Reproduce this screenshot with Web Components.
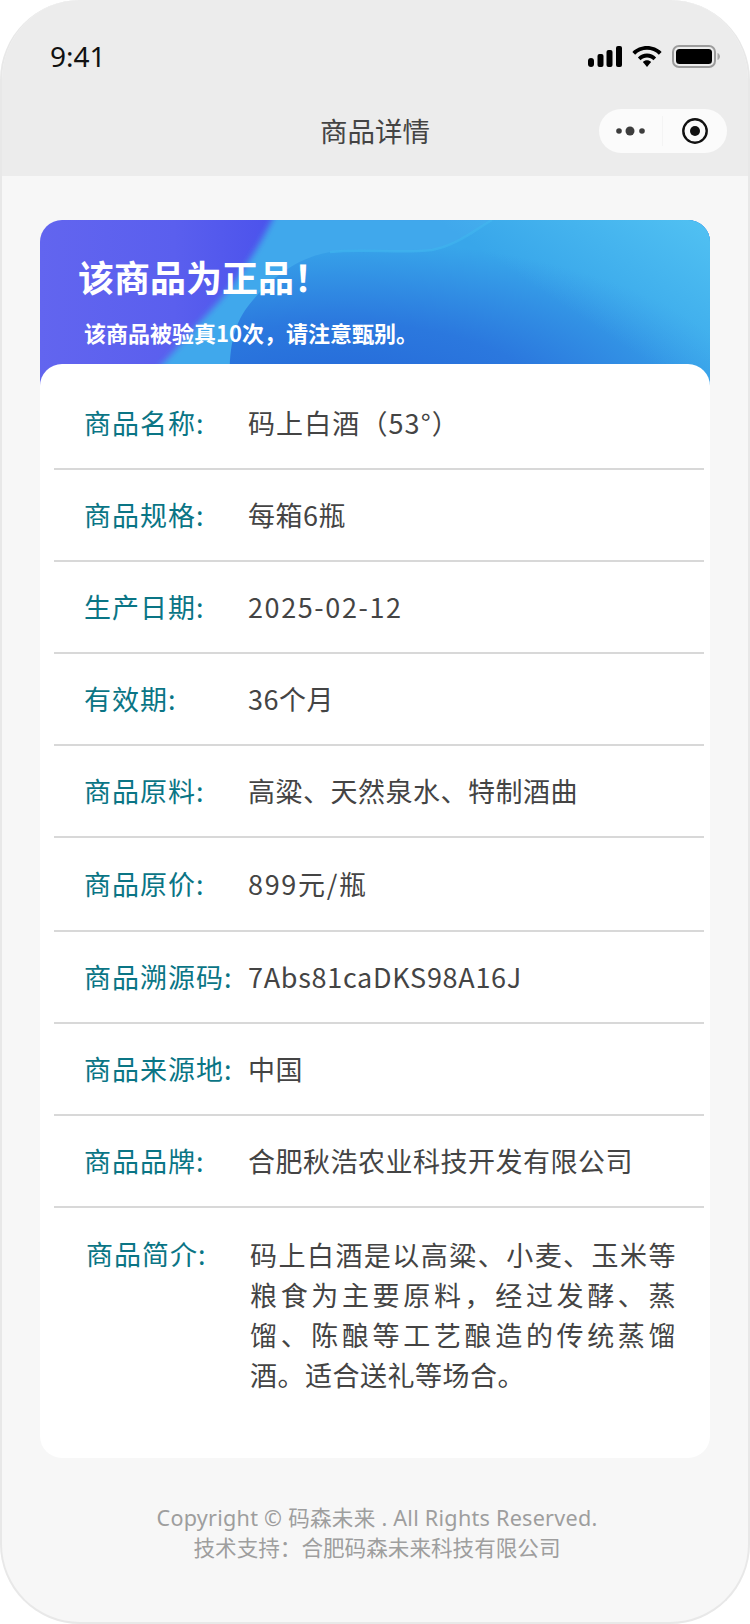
<!DOCTYPE html>
<html lang="zh">
<head>
<meta charset="utf-8">
<title>商品详情</title>
<style>
  html, body { margin: 0; padding: 0; background: #fff; }
  body { font-family: "Noto Sans", "Noto Sans CJK SC", sans-serif; }
</style>
</head>
<body>
<phone-frame>
  <status-bar slot="top"></status-bar>
  <nav-bar slot="top">商品详情</nav-bar>
  <product-card>
    <span slot="title">该商品为正品！</span>
    <span slot="sub">该商品被验真10次，请注意甄别。</span>
    <info-row label="商品名称:" style="--value-spacing:1.100px">码上白酒（53°）</info-row>
    <info-row label="商品规格:">每箱6瓶</info-row>
    <info-row label="生产日期:" style="--value-spacing:1.600px">2025-02-12</info-row>
    <info-row label="有效期:">36个月</info-row>
    <info-row label="商品原料:">高粱、天然泉水、特制酒曲</info-row>
    <info-row label="商品原价:" style="--value-spacing:1.700px;min-height:94px">899元/瓶</info-row>
    <info-row label="商品溯源码:" style="--value-spacing:.7px">7Abs81caDKS98A16J</info-row>
    <info-row label="商品来源地:">中国</info-row>
    <info-row label="商品品牌:">合肥秋浩农业科技开发有限公司</info-row>
    <info-row label="商品简介:" long>码上白酒是以高粱、小麦、玉米等粮食为主要原料，经过发酵、蒸馏、陈酿等工艺酿造的传统蒸馏酒。适合送礼等场合。</info-row>
  </product-card>
  <page-footer>
    <div style="letter-spacing:.25px">Copyright © 码森未来 . All Rights Reserved.</div>
    <div>技术支持：合肥码森未来科技有限公司</div>
  </page-footer>
</phone-frame>

<script>
class PhoneFrame extends HTMLElement {
  constructor() {
    super();
    const root = this.attachShadow({mode:'open'});
    root.innerHTML = `
      <style>
        :host { display: block; width: 750px; height: 1624px; box-sizing: border-box;
          border: 2px solid #e8e8e8; border-top: 0; border-radius: 80px; overflow: hidden; background: #f7f7f7; }
        .top { background: #ececec; margin: 0 -2px; }
      </style>
      <div class="top"><slot name="top"></slot></div>
      <slot></slot>`;
  }
}

class StatusBar extends HTMLElement {
  constructor() {
    super();
    const root = this.attachShadow({mode:'open'});
    root.innerHTML = `
      <style>
        :host { display: flex; align-items: center; justify-content: space-between; height: 88px;
          padding: 24px 30px 0 50px; box-sizing: border-box; color: #111; font-size: 28px; }
        .icons { display: flex; align-items: center; gap: 10px; }
        svg { display: block; }
      </style>
      <span>9:41</span>
      <div class="icons">
        <svg width="34" height="21" viewBox="0 0 34 21" fill="#000">
          <rect x="0" y="12" width="6" height="9" rx="3"/>
          <rect x="9.500" y="8" width="6" height="13" rx="2"/>
          <rect x="18.500" y="4" width="6" height="17" rx="2"/>
          <rect x="28" y="0" width="6" height="21" rx="2"/>
        </svg>
        <svg width="30" height="21" viewBox="0 0 32 23" fill="#000">
          <path d="M0 6.500C4 2.400 10 0 16 0s12 2.400 16 6.500l-3 3C25.600 6.200 21 4.200 16 4.200S6.400 6.200 3 9.500z"/>
          <path d="M6 12.500C8.600 9.900 12.200 8.300 16 8.300s7.400 1.600 10 4.200l-3 3c-1.900-1.800-4.300-2.900-7-2.900s-5.100 1.100-7 2.900z"/>
          <path d="M11.500 17.500c1.200-1.100 2.800-1.800 4.500-1.800s3.300.7 4.500 1.800L16 23z"/>
        </svg>
        <svg width="48" height="23" viewBox="0 0 48 23">
          <rect x="1" y="1" width="42" height="21" rx="6" fill="none" stroke="#9c9c9c" stroke-width="2"/>
          <rect x="4" y="4" width="36" height="15" rx="3.500" fill="#000"/>
          <path d="M45.500 8c1.600.6 2.500 2 2.500 3.500s-.9 2.900-2.500 3.500z" fill="#a8a8a8"/>
        </svg>
      </div>`;
  }
}

class NavBar extends HTMLElement {
  constructor() {
    super();
    const root = this.attachShadow({mode:'open'});
    root.innerHTML = `
      <style>
        :host { display: flex; align-items: center; justify-content: center; position: relative;
          height: 88px; padding-bottom: 4px; box-sizing: border-box; color: #444; font-size: 27.500px; font-family: "Noto Sans CJK SC", sans-serif; }
        .capsule { position: absolute; right: 23px; top: 21px; width: 128px; height: 44px; border-radius: 22px;
          background: #fbfbfb; display: flex; align-items: center; }
        .more { flex: 0 0 63px; height: 30px; border-right: 1px solid #f4f4f4; display: flex; align-items: center; justify-content: center; }
        .record { flex: 1; display: flex; justify-content: center; }
        svg { display: block; }
      </style>
      <slot></slot>
      <div class="capsule">
        <div class="more">
          <svg width="29" height="10" viewBox="0 0 29 10" fill="#3d3d3d">
            <circle cx="3" cy="5" r="2.800"/><circle cx="14" cy="5" r="4.500"/><circle cx="26" cy="5" r="2.800"/>
          </svg>
        </div>
        <div class="record">
          <svg width="26" height="26" viewBox="0 0 26 26">
            <circle cx="13" cy="13" r="11.700" fill="none" stroke="#111" stroke-width="2.400"/>
            <circle cx="13" cy="13" r="5" fill="#111"/>
          </svg>
        </div>
      </div>`;
  }
}

class ProductCard extends HTMLElement {
  constructor() {
    super();
    const root = this.attachShadow({mode:'open'});
    root.innerHTML = `
      <style>
        :host { display: block; margin: 44px 38px 0; font-family: "Noto Sans CJK SC", sans-serif; }
        .banner { position: relative; height: 166px; margin-bottom: -22px; border-radius: 22px 22px 0 0; overflow: hidden;
          background: linear-gradient(90deg, #6265ef 0%, #5a5fee 20%, #4c53ec 34%, #4c53ec 100%); color: #fff; }
        .banner svg { position: absolute; inset: 0; }
        .title, .sub { position: relative; display: block; }
        .title { padding: 30px 0 0 38px; font-size: 36px; line-height: 52px; font-weight: 700; }
        .sub { padding: 15px 0 0 44px; font-size: 22px; line-height: 30px; font-weight: 700; }
        .panel { position: relative; background: #fff; border-radius: 22px; padding: 14px 6px 0 14px; }
      </style>
      <div class="banner">
        <svg width="670" height="166" viewBox="0 0 670 166">
          <defs>
            <radialGradient id="core" gradientUnits="userSpaceOnUse" cx="0" cy="0" r="1" gradientTransform="translate(300 185) scale(410 165)">
              <stop offset="0" stop-color="#2466d8"/>
              <stop offset=".5" stop-color="#2b78de"/>
              <stop offset="1" stop-color="#38a6ea"/>
            </radialGradient>
            <linearGradient id="corner" gradientUnits="userSpaceOnUse" x1="590" y1="130" x2="670" y2="10">
              <stop offset="0" stop-color="#50c0f2" stop-opacity="0"/>
              <stop offset="1" stop-color="#50c0f2"/>
            </linearGradient>
            <filter id="soft" x="-5%" y="-5%" width="110%" height="110%"><feGaussianBlur stdDeviation="3"/></filter>
          </defs>
          <path d="M117 150L180 80C205 50 220 25 235 -6H690V170H110Z" fill="#3fa8ec" filter="url(#soft)"/>
          <path d="M190 166C188 125 195 100 213 80C230 60 255 38 290 32C325 28 360 34 392 30C415 26 432 12 452 0H670V166Z" fill="url(#core)"/>
          <path d="M290 32C325 28 360 34 392 30C415 26 432 12 452 0" fill="none" stroke="#3fb2ee" stroke-width="2.500" opacity=".8"/>
          <rect width="670" height="166" fill="url(#corner)"/>
        </svg>
        <span class="title"><slot name="title"></slot></span>
        <span class="sub"><slot name="sub"></slot></span>
      </div>
      <div class="panel"><slot></slot></div>`;
  }
}

class InfoRow extends HTMLElement {
  constructor() {
    super();
    const root = this.attachShadow({mode:'open'});
    root.innerHTML = `
      <style>
        :host { display: grid; grid-template-columns: 194px 1fr; min-height: 92px; box-sizing: border-box;
          border-bottom: 2px solid #d8d8d8; align-items: center; font-size: 27px; line-height: 38px; letter-spacing: .5px; }
        :host(:last-child) { border-bottom: 0; }
        :host([long]) { align-items: start; padding: 27px 0 63px; }
        .label { padding-left: 30px; color: #0a7585; white-space: nowrap; letter-spacing: 1px; }
        .value { color: #444; letter-spacing: var(--value-spacing, .5px); }
        :host([long]) .label { padding-left: 32px; }
        :host([long]) .value { padding: 0 28px 0 2px; line-height: 40px; text-align: justify; }
      </style>
      <span class="label"></span>
      <span class="value"><slot></slot></span>`;
    root.querySelector('.label').textContent = this.getAttribute('label');
  }
}

class PageFooter extends HTMLElement {
  constructor() {
    super();
    const root = this.attachShadow({mode:'open'});
    root.innerHTML = `
      <style>
        :host { display: block; margin-top: 45px; padding-left: 4px; text-align: center; color: #9e9e9e; font-size: 21.600px; line-height: 30px;
          font-family: "Noto Sans", "Noto Sans CJK SC", sans-serif; }
      </style>
      <slot></slot>`;
  }
}

customElements.define('phone-frame', PhoneFrame);
customElements.define('status-bar', StatusBar);
customElements.define('nav-bar', NavBar);
customElements.define('product-card', ProductCard);
customElements.define('info-row', InfoRow);
customElements.define('page-footer', PageFooter);
</script>
</body>
</html>
